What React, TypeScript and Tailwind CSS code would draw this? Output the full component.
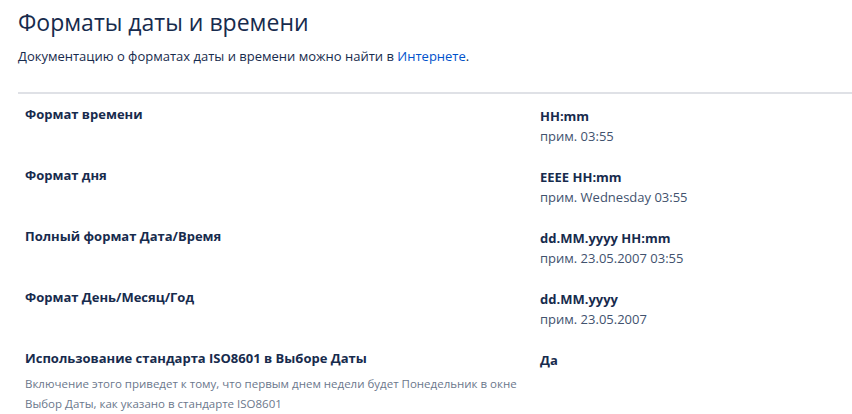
import React from 'react';

interface FormatRow {
  label: string;
  value: string;
  example?: string;
  description?: string;
}

const rows: FormatRow[] = [
  { label: 'Формат времени', value: 'HH:mm', example: 'прим. 03:55' },
  { label: 'Формат дня', value: 'EEEE HH:mm', example: 'прим. Wednesday 03:55' },
  { label: 'Полный формат Дата/Время', value: 'dd.MM.yyyy HH:mm', example: 'прим. 23.05.2007 03:55' },
  { label: 'Формат День/Месяц/Год', value: 'dd.MM.yyyy', example: 'прим. 23.05.2007' },
  {
    label: 'Использование стандарта ISO8601 в Выборе Даты',
    value: 'Да',
    description:
      'Включение этого приведет к тому, что первым днем недели будет Понедельник в окне Выбор Даты, как указано в стандарте ISO8601'
  }
];

const App: React.FC = () => {
  return (
    <div className="min-h-[414px] bg-white pl-[18px] text-[#172b4d] font-['Open_Sans',sans-serif]">
      <h1 className="pt-[6px] text-[23px] leading-[32px] font-medium">Форматы даты и времени</h1>
      <p className="mt-[8px] text-[13px] leading-[20px]">
        Документацию о форматах даты и времени можно найти в{' '}
        <a href="#" className="text-[#0052cc]">Интернете</a>.
      </p>
      <div className="mt-[26px] border-t-2 border-[#dfe1e6] pt-[8px]">
        {rows.map((row) => (
          <div key={row.label} className="grid grid-cols-[515px_1fr] pl-[7px] min-h-[61px]">
            <div className="pr-[12px]">
              <div className="text-[13px] font-bold leading-[24px]">{row.label}</div>
              {row.description && (
                <div className="mt-[4px] text-[11.5px] leading-[20px] text-[#6b778c]">{row.description}</div>
              )}
            </div>
            <div className="pt-[4px]">
              <div className="text-[13px] font-bold leading-[20px]">{row.value}</div>
              {row.example && <div className="text-[13px] leading-[20px] text-[#42526e]">{row.example}</div>}
            </div>
          </div>
        ))}
      </div>
    </div>
  );
};

export default App;
